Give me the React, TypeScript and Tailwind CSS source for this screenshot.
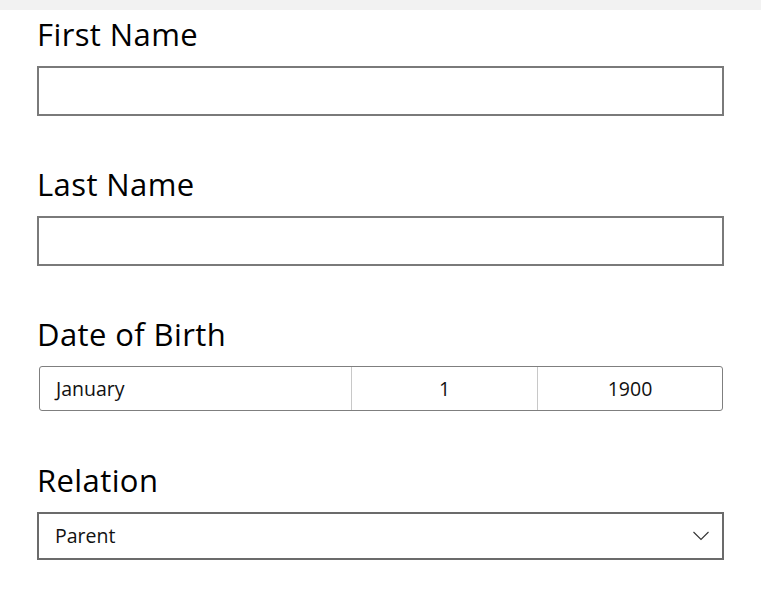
const labelCls = "h-[56px] pt-[4px] text-[31px] leading-[40px] tracking-[0.4px] text-black";

export default function App() {
  return (
    <div className="min-h-[611px] w-[761px] bg-white font-['Open_Sans',sans-serif]">
      <div className="h-[10px] bg-[#f2f2f2]" />
      <div className="pl-[37px] pr-[37px]">
        {/* First name */}
        <div className={labelCls}>First Name</div>
        <input className="block h-[50px] w-full border-2 border-[#7a7a7a] bg-white px-3 outline-none" />

        {/* Last name */}
        <div className={`${labelCls} mt-[44px]`}>Last Name</div>
        <input className="block h-[50px] w-full border-2 border-[#7a7a7a] bg-white px-3 outline-none" />

        {/* Date of birth */}
        <div className={`${labelCls} mt-[44px]`}>Date of Birth</div>
        <div className="ml-[2px] mr-[1px] flex h-[45px] rounded-[3px] border border-[#7f7f7f] text-[19.5px] text-[#111]">
          <div className="flex w-[312px] items-center border-r border-[#c8c8c8] pl-[16px]">January</div>
          <div className="flex w-[186px] items-center justify-center border-r border-[#c8c8c8]">1</div>
          <div className="flex flex-1 items-center justify-center">1900</div>
        </div>

        {/* Relation */}
        <div className={`${labelCls} mt-[45px]`}>Relation</div>
        <div className="flex h-[48px] items-center justify-between border-2 border-[#6b6b6b] pl-[16px] pr-[13px] text-[19.5px] text-[#111]">
          <span>Parent</span>
          <svg width="16" height="10" viewBox="0 0 16 10" fill="none">
            <polyline points="0.5,1 8,8.5 15.5,1" stroke="#333" strokeWidth="1.1" />
          </svg>
        </div>
      </div>
    </div>
  );
}
